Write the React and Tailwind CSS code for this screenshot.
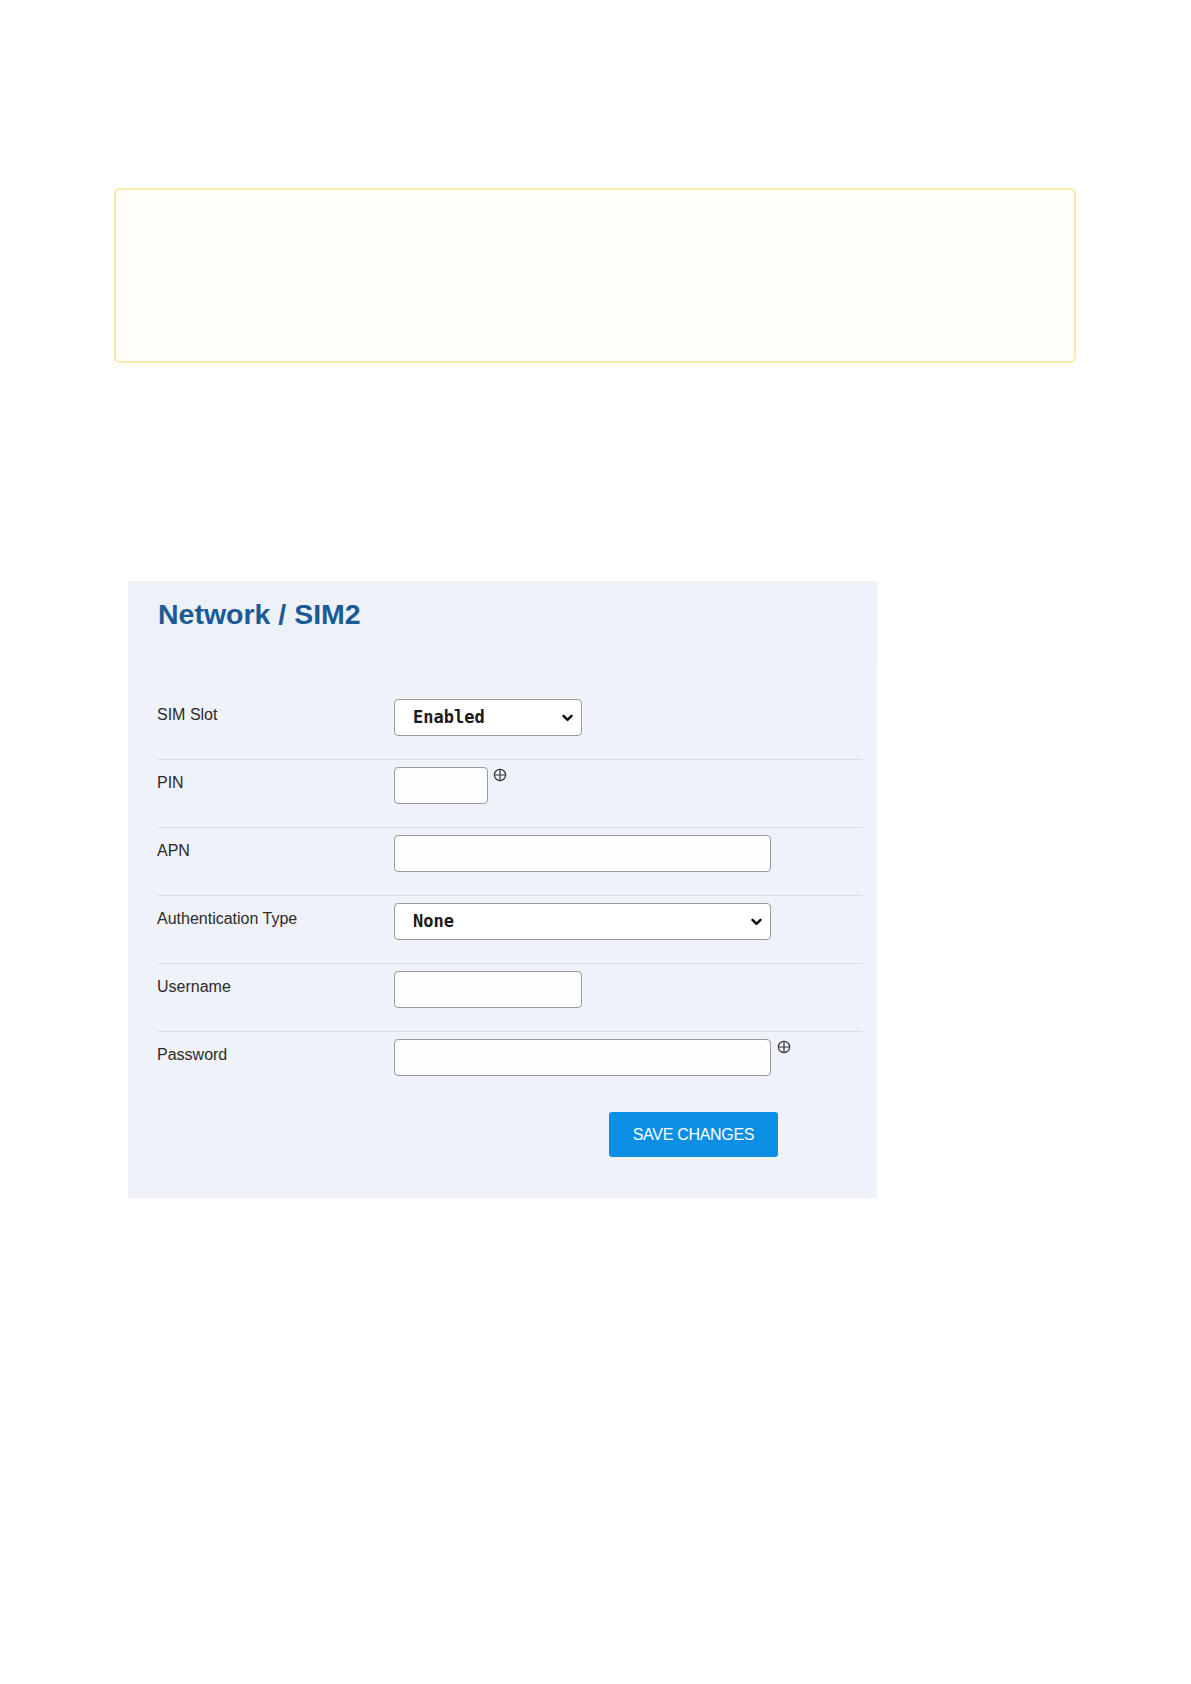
import { useState } from "react";

const sans = { fontFamily: '"Liberation Sans", Arial, sans-serif' };

function Chevron() {
  return (
    <svg className="pointer-events-none absolute right-[9px] top-1/2 -translate-y-1/2" width="11" height="8" viewBox="0 0 11 8" fill="none">
      <path d="M1.5 1.8L5.5 5.8L9.5 1.8" stroke="#111" strokeWidth="2.4" strokeLinecap="round" strokeLinejoin="round" />
    </svg>
  );
}

function PlusCircle() {
  return (
    <svg width="14" height="14" viewBox="0 0 14 14" fill="none" className="shrink-0">
      <circle cx="7" cy="7" r="5.6" stroke="#333" strokeWidth="1.2" />
      <path d="M7 1.4V12.6M1.4 7H12.6" stroke="#333" strokeWidth="1.2" />
    </svg>
  );
}

function Select({ value, options, width, onChange }) {
  return (
    <div className={`relative h-[37px] ${width}`}>
      <select
        value={value}
        onChange={(e) => onChange(e.target.value)}
        className="h-full w-full appearance-none rounded-[4px] border border-[#9a9a9a] bg-white pl-[18px] text-[17px] font-bold text-[#1a1a1a] outline-none"
        style={{ fontFamily: '"DejaVu Sans Mono", "Liberation Mono", monospace' }}
      >
        {options.map((o) => (
          <option key={o}>{o}</option>
        ))}
      </select>
      <Chevron />
    </div>
  );
}

function TextInput({ width, type = "text" }) {
  return (
    <input
      type={type}
      className={`h-[37px] ${width} rounded-[4px] border border-[#9a9a9a] bg-[#fdfeff] px-2 text-[15px] outline-none`}
    />
  );
}

function Row({ label, children, last }) {
  return (
    <div className={`flex pt-[7px] ${last ? "pb-[24px]" : "pb-[23px] border-b border-[#d9dde4]"}`}>
      <div className="w-[237px] shrink-0 pt-[7px] text-[16px] leading-[18px] text-[#2b2b2b]" style={sans}>
        {label}
      </div>
      <div className="flex items-start">{children}</div>
    </div>
  );
}

export default function App() {
  const [slot, setSlot] = useState("Enabled");
  const [auth, setAuth] = useState("None");

  return (
    <div className="min-h-[1684px] w-full bg-white pt-[188px]" style={sans}>
      {/* Notice box */}
      <div className="ml-[114px] h-[175px] w-[962px] rounded-[5px] border-2 border-[#fde8ad] bg-[#fffdf7]" />

      {/* SIM2 panel */}
      <div className="ml-[128px] mt-[218px] w-[749px] bg-[#eff2f9]">
        <div className="h-[78px] bg-[#edf1f8] pl-[30px] pt-[17px]">
          <h1 className="text-[28.5px] font-bold leading-[32px] text-[#195a97]" style={sans}>
            Network / SIM2
          </h1>
        </div>

        <div className="pl-[29px] pr-[14px] pt-[33px] pb-[41px]">
          <Row label="SIM Slot">
            <Select value={slot} options={["Enabled", "Disabled"]} width="w-[188px]" onChange={setSlot} />
          </Row>
          <Row label="PIN">
            <TextInput width="w-[94px]" type="password" />
            <div className="ml-[5px] mt-[1px]">
              <PlusCircle />
            </div>
          </Row>
          <Row label="APN">
            <TextInput width="w-[377px]" />
          </Row>
          <Row label="Authentication Type">
            <Select value={auth} options={["None", "PAP", "CHAP", "PAP/CHAP"]} width="w-[377px]" onChange={setAuth} />
          </Row>
          <Row label="Username">
            <TextInput width="w-[188px]" />
          </Row>
          <Row label="Password" last>
            <TextInput width="w-[377px]" type="password" />
            <div className="ml-[6px] mt-[1px]">
              <PlusCircle />
            </div>
          </Row>

          <div className="ml-[452px] mt-[12px]">
            <button
              className="h-[45px] w-[169px] rounded-[3px] bg-[#0b8fe5] text-[16px] tracking-[-0.3px] text-white"
              style={sans}
            >
              SAVE CHANGES
            </button>
          </div>
        </div>
      </div>
    </div>
  );
}
